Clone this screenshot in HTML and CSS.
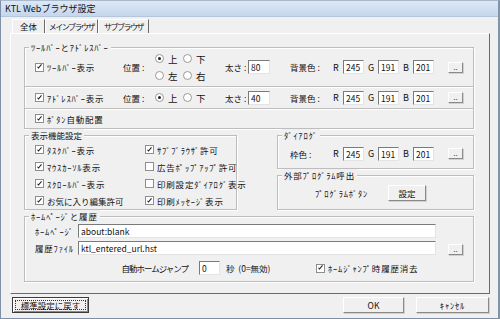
FILE: index.html
```html
<!DOCTYPE html>
<html lang="ja">
<head>
	<meta charset="UTF-8">
	<title>KTL Webブラウザ設定</title>
	<link rel="stylesheet" href="styles.css">
</head>
<body class="body">
	<div class="window">
		<div class="titlebar">KTL Webブラウザ設定</div>

		<div class="tabs">
			<span class="tab tab--active">全体</span>
			<span class="tab tab--main">メインブラウザ</span>
			<span class="tab tab--sub">サブブラウザ</span>
		</div>

		<div class="panel">
			<!-- toolbar / address bar -->
			<div class="group bars">
				<span class="group__title hw">ﾂｰﾙﾊﾞｰとｱﾄﾞﾚｽﾊﾞｰ</span>
				<div class="bars__row bars__row--tall">
					<label class="check bars__check hw"><span class="cb cb--on"></span>ﾂｰﾙﾊﾞｰ表示</label>
					<span class="lbl lbl--pos">位置 :</span>
					<div class="radios">
						<span class="radio"><span class="rd rd--on"></span>上</span>
						<span class="radio"><span class="rd"></span>下</span>
						<span class="radio"><span class="rd"></span>左</span>
						<span class="radio"><span class="rd"></span>右</span>
					</div>
					<span class="lbl lbl--size">太さ :</span>
					<input class="field field--num" value="80">
					<span class="lbl lbl--color">背景色 :</span>
					<div class="rgb">
						<span class="rgb__ch">R</span><input class="field field--rgb" value="245">
						<span class="rgb__ch">G</span><input class="field field--rgb" value="191">
						<span class="rgb__ch">B</span><input class="field field--rgb" value="201">
						<button class="btn btn--more">..</button>
					</div>
				</div>
				<div class="bars__row bars__row--mid">
					<label class="check bars__check hw"><span class="cb cb--on"></span>ｱﾄﾞﾚｽﾊﾞｰ表示</label>
					<span class="lbl lbl--pos">位置 :</span>
					<div class="radios">
						<span class="radio"><span class="rd rd--on"></span>上</span>
						<span class="radio"><span class="rd"></span>下</span>
					</div>
					<span class="lbl lbl--size">太さ :</span>
					<input class="field field--num" value="40">
					<span class="lbl lbl--color">背景色 :</span>
					<div class="rgb">
						<span class="rgb__ch">R</span><input class="field field--rgb" value="245">
						<span class="rgb__ch">G</span><input class="field field--rgb" value="191">
						<span class="rgb__ch">B</span><input class="field field--rgb" value="201">
						<button class="btn btn--more">..</button>
					</div>
				</div>
				<div class="bars__row bars__row--last">
					<label class="check hw"><span class="cb cb--on"></span>ﾎﾞﾀﾝ自動配置</label>
				</div>
			</div>

			<div class="middle">
				<!-- display features -->
				<div class="group view">
					<span class="group__title">表示機能設定</span>
					<label class="check hw"><span class="cb cb--on"></span>ﾀｽｸﾊﾞｰ表示</label>
					<label class="check hw"><span class="cb cb--on"></span>ｻﾌﾞﾌﾞﾗｳｻﾞ許可</label>
					<label class="check hw"><span class="cb cb--on"></span>ﾏｳｽｶｰｿﾙ表示</label>
					<label class="check hw"><span class="cb"></span>広告ﾎﾟｯﾌﾟｱｯﾌﾟ許可</label>
					<label class="check hw"><span class="cb cb--on"></span>ｽｸﾛｰﾙﾊﾞｰ表示</label>
					<label class="check hw"><span class="cb"></span>印刷設定ﾀﾞｲｱﾛｸﾞ表示</label>
					<label class="check"><span class="cb cb--on"></span>お気に入り編集許可</label>
					<label class="check hw"><span class="cb cb--on"></span>印刷ﾒｯｾｰｼﾞ表示</label>
				</div>

				<div class="side">
					<div class="group dialog">
						<span class="group__title hw">ﾀﾞｲｱﾛｸﾞ</span>
						<span class="lbl lbl--frame">枠色 :</span>
						<div class="rgb">
							<span class="rgb__ch">R</span><input class="field field--rgb" value="245">
							<span class="rgb__ch">G</span><input class="field field--rgb" value="191">
							<span class="rgb__ch">B</span><input class="field field--rgb" value="201">
							<button class="btn btn--more">..</button>
						</div>
					</div>
					<div class="group external">
						<span class="group__title hw">外部ﾌﾟﾛｸﾞﾗﾑ呼出</span>
						<span class="lbl lbl--prog hw">ﾌﾟﾛｸﾞﾗﾑﾎﾞﾀﾝ</span>
						<button class="btn btn--set">設定</button>
					</div>
				</div>
			</div>

			<!-- home page and history -->
			<div class="group home">
				<span class="group__title hw">ﾎｰﾑﾍﾟｰｼﾞと履歴</span>
				<div class="home__row">
					<span class="lbl lbl--home hw">ﾎｰﾑﾍﾟｰｼﾞ</span>
					<input class="field field--wide" value="about:blank">
				</div>
				<div class="home__row">
					<span class="lbl lbl--home hw">履歴ﾌｧｲﾙ</span>
					<input class="field field--wide" value="ktl_entered_url.hst">
					<button class="btn btn--more btn--file">..</button>
				</div>
				<div class="home__row home__row--jump">
					<span class="lbl lbl--jump">自動ホームジャンプ</span>
					<input class="field field--rgb" value="0">
					<span class="lbl lbl--sec">秒&nbsp;&nbsp;(0=無効)</span>
					<label class="check hw"><span class="cb cb--on"></span>ﾎｰﾑｼﾞｬﾝﾌﾟ時履歴消去</label>
				</div>
			</div>
		</div>

		<div class="actions">
			<button class="btn btn--action btn--default"><span class="btn__focus">標準設定に戻す</span></button>
			<div class="actions__right">
				<button class="btn btn--action btn--ok">OK</button>
				<button class="btn btn--action btn--cancel hw">ｷｬﾝｾﾙ</button>
			</div>
		</div>
	</div>
</body>
</html>
```

FILE: styles.css
```css
:root {
	--face: #f0f0f0;
	--line: #bdbdbd;
	--shadow: #8a8a8a;
	--dark: #6a6a6a;
	--text: #111;
	--ui-font: "Noto Sans CJK JP", "Noto Sans", sans-serif;
}

*,
*::before,
*::after {
	box-sizing: border-box;
}

.body {
	margin: 0;
	background: #fff;
	font-family: var(--ui-font);
	font-size: 8.5px;
	color: var(--text);
}

/* half-width katakana runs a bit wider in the original UI font */
.hw {
	letter-spacing: 0.8px;
}

.window {
	display: flex;
	flex-direction: column;
	width: 500px;
	height: 319px;
	background: var(--face);
	border: 1px solid #7f90a6;
	border-top-color: #a9b9cc;
	border-right: 2px solid #8294ab;
}

.titlebar {
	height: 16px;
	padding-left: 4px;
	line-height: 16px;
	font-size: 9px;
	background: linear-gradient(#dde8f5, #c5d7ed);
	border-bottom: 1px solid #b4c6dc;
}

/* tabs */

.tabs {
	display: flex;
	align-items: flex-end;
	height: 16px;
	padding-left: 11px;
}

.tab {
	height: 14px;
	line-height: 13px;
	font-size: 8px;
	letter-spacing: -1.5px;
	text-align: center;
	border-top: 1px solid #fff;
	border-left: 1px solid #fff;
	border-right: 1px solid var(--dark);
	white-space: nowrap;
}

.tab--main {
	width: 53px;
}

.tab--sub {
	width: 51px;
}

.tab--active {
	width: 33px;
	height: 15px;
	margin-bottom: -1px;
	font-size: 8.5px;
	letter-spacing: 0;
	background: var(--face);
}

.panel {
	display: flex;
	flex-direction: column;
	gap: 6px;
	width: 480px;
	margin-left: 9px;
	padding: 13px 15px 11px 13px;
	border: 1px solid;
	border-color: #fff var(--dark) var(--dark) #fff;
}

/* group boxes */

.group {
	position: relative;
	border: 1px solid var(--line);
	box-shadow: 1px 1px 0 #fff, inset 1px 1px 0 #fff;
}

.group__title {
	position: absolute;
	top: -7px;
	left: 4px;
	padding: 0 2px;
	line-height: 12px;
	background: var(--face);
	white-space: nowrap;
}

.bars {
	height: 82px;
}

.bars__row {
	display: flex;
	align-items: center;
	padding-left: 10px;
	border-bottom: 1px solid var(--line);
	box-shadow: 0 1px 0 #fff;
}

.bars__row--tall {
	height: 39px;
}

.bars__row--mid {
	height: 22px;
}

.bars__row--last {
	height: 19px;
	border-bottom: none;
	box-shadow: none;
}

.bars__check {
	width: 88px;
}

.lbl {
	white-space: nowrap;
}

.lbl--pos {
	width: 30px;
}

.lbl--size {
	width: 23px;
}

.lbl--color {
	width: 43px;
	margin-left: 20px;
}

.radios {
	display: grid;
	grid-template-columns: 28px 28px;
	row-gap: 6px;
	width: 72px;
	padding-left: 2px;
}

.radio {
	display: flex;
	align-items: center;
	gap: 4px;
	height: 11px;
	font-size: 9.5px;
}

.rd {
	display: flex;
	align-items: center;
	justify-content: center;
	width: 9px;
	height: 9px;
	border: 1px solid #9a9a9a;
	border-radius: 50%;
	background: #fff;
}

.rd--on::after {
	content: "";
	width: 3px;
	height: 3px;
	border-radius: 50%;
	background: #222;
}

.check {
	display: flex;
	align-items: center;
	gap: 3px;
	white-space: nowrap;
}

.cb {
	display: flex;
	align-items: center;
	justify-content: center;
	flex: none;
	width: 9px;
	height: 9px;
	border: 1px solid #8e8e8e;
	background: #fff;
}

.cb--on::after {
	content: "";
	width: 5px;
	height: 2px;
	margin-top: -2px;
	border-left: 1.5px solid #1b1b1b;
	border-bottom: 1.5px solid #1b1b1b;
	transform: rotate(-50deg);
}

/* text fields and buttons */

.field {
	height: 14px;
	padding: 0 2px;
	font: inherit;
	line-height: 12px;
	color: var(--text);
	background: #fff;
	border: 1px solid;
	border-color: #7a7a7a #e4e4e4 #e4e4e4 #7a7a7a;
	outline: none;
}

.field--num {
	width: 22px;
}

.field--rgb {
	width: 21px;
}

.field--wide {
	width: 358px;
}

.rgb {
	display: flex;
	align-items: center;
}

.rgb__ch {
	width: 10px;
	font-size: 9px;
}

.rgb__ch ~ .rgb__ch {
	margin-left: 4px;
}

.btn {
	padding: 0;
	font: inherit;
	color: var(--text);
	background: var(--face);
	border: 1px solid;
	border-color: #fff var(--shadow) var(--shadow) #fff;
	box-shadow: 1px 1px 0 #d0d0d0;
}

.btn--more {
	width: 15px;
	height: 11px;
	margin-left: 14px;
	font-size: 7px;
	line-height: 9px;
}

.btn--set {
	width: 38px;
	height: 16px;
}

/* middle part */

.middle {
	display: flex;
	gap: 40px;
	height: 75px;
}

.view {
	display: grid;
	grid-template-columns: 110px 1fr;
	grid-auto-rows: 17px;
	align-items: center;
	width: 213px;
	padding: 5px 0 0 10px;
}

.side {
	display: flex;
	flex-direction: column;
	gap: 6px;
	flex: 1;
}

.dialog {
	display: flex;
	align-items: center;
	height: 34px;
	padding: 3px 0 0 12px;
}

.lbl--frame {
	width: 43px;
}

.external {
	display: flex;
	align-items: center;
	height: 35px;
	padding: 1px 0 0 37px;
}

.lbl--prog {
	width: 73px;
}

/* home page */

.home {
	display: flex;
	flex-direction: column;
	height: 66px;
	padding: 7px 0 0 10px;
}

.home__row {
	display: flex;
	align-items: center;
	height: 14px;
}

.home__row + .home__row {
	margin-top: 3px;
}

.home__row--jump {
	margin-top: 6px !important;
}

.lbl--home {
	width: 43px;
}

.btn--file {
	margin-left: 12px;
	margin-top: 2px;
}

.lbl--jump {
	width: 164px;
	padding-right: 11px;
	text-align: right;
	letter-spacing: -1px;
}

.lbl--sec {
	width: 96px;
	padding-left: 6px;
}

/* bottom buttons */

.actions {
	display: flex;
	justify-content: space-between;
	margin-top: 3px;
	padding: 0 9px 0 11px;
}

.actions__right {
	display: flex;
	gap: 12px;
}

.btn--action {
	height: 16px;
}

.btn--default {
	width: 77px;
	padding: 2px;
	border: 1px solid #3c3c3c;
	box-shadow: inset 1px 1px 0 #fff, inset -1px -1px 0 var(--shadow);
}

.btn__focus {
	display: block;
	height: 10px;
	line-height: 9px;
	border: 1px dotted #333;
}

.btn--ok {
	width: 61px;
}

.btn--cancel {
	width: 73px;
}
```
